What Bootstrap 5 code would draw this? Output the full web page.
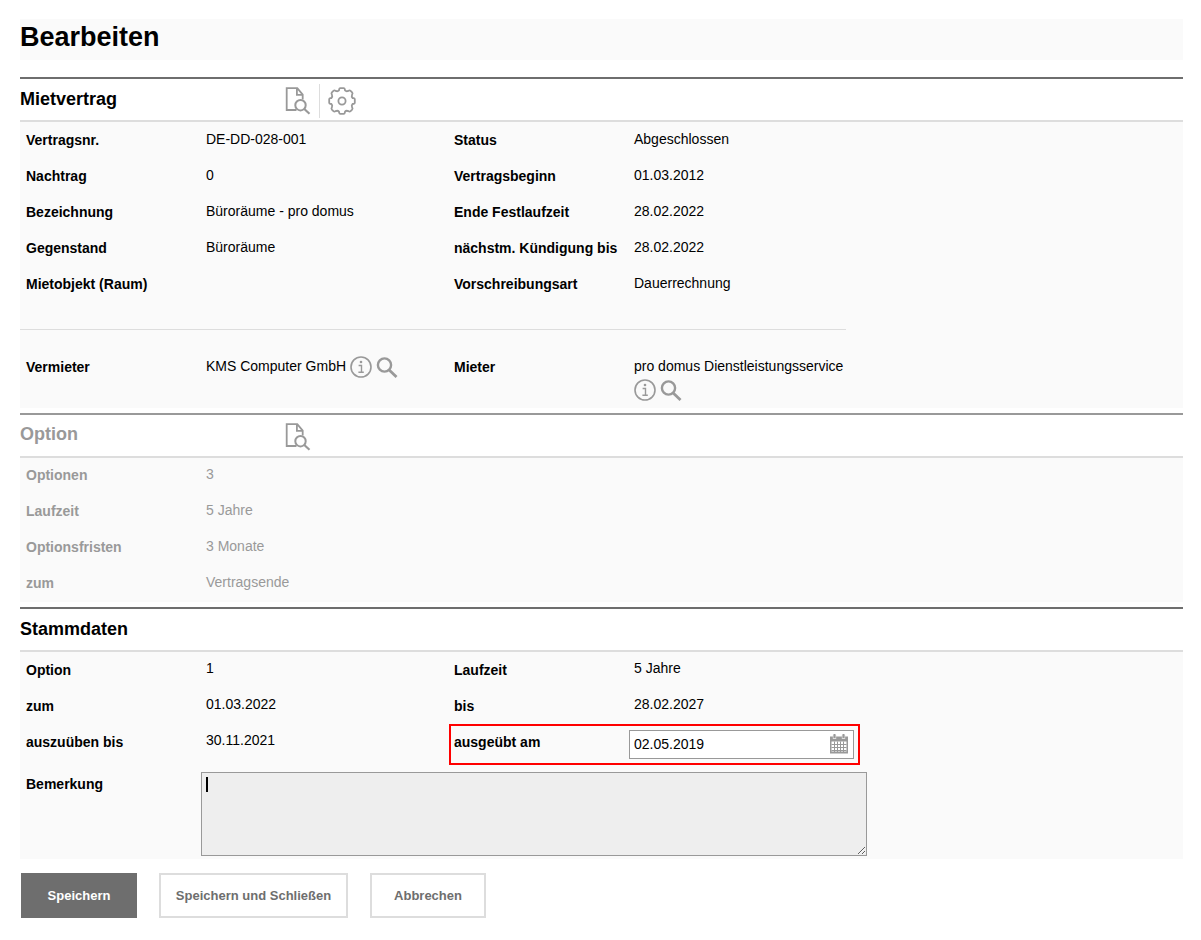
<!DOCTYPE html>
<html lang="de">
<head>
<meta charset="utf-8">
<meta name="viewport" content="width=device-width, initial-scale=1">
<title>Mietvertrag bearbeiten</title>
<link href="https://cdn.jsdelivr.net/npm/bootstrap@5.3.0/dist/css/bootstrap.min.css" rel="stylesheet">
<script src="https://cdn.jsdelivr.net/npm/bootstrap@5.3.0/dist/js/bootstrap.bundle.min.js" defer></script>
<style>
  body { font-family: "Liberation Sans", Arial, sans-serif; font-size: 14px; line-height: 20px; color: #000; background: #fff; }
  .page { padding: 19px 18px 22px 20px; }
  .page-title { font-size: 27px; line-height: 37px; font-weight: 700; padding-bottom: 4px; margin-bottom: 17px; background: #fafafa; }
  .panel { border-top: 2px solid #6e6e6e; margin-bottom: 5px; }
  .panel-head { display: grid; grid-template-columns: 265px 1fr; height: 43px; border-bottom: 2px solid #ddd; align-items: center; }
  .panel-head h2 { font-size: 18px; line-height: 24px; font-weight: 700; margin: 0; padding-bottom: 2px; }
  .panel-body { background: #fafafa; }
  .panel-muted { border-top-color: #999; color: #999; }
  .fields { display: grid; grid-template-columns: 180px 248px 180px 1fr; grid-auto-rows: minmax(36px, auto); margin: 0; max-width: 826px; }
  .fields-wide { max-width: 847px; }
  .key { font-weight: 700; line-height: 36px; padding-left: 6px; white-space: nowrap; }
  .val { line-height: 34px; padding-left: 6px; margin: 0; }
  .fields-wide .val { line-height: 32px; }
  .panel-muted .key { line-height: 34px; }
  .panel-muted .val { line-height: 32px; }
  .panel-muted h2 { padding-bottom: 4px; }
  .party { display: flex; flex-wrap: wrap; align-items: flex-end; align-content: flex-start; column-gap: 4px; row-gap: 1px; line-height: 24px; padding-top: 5px; min-height: 59px; }
  .rule { border-top: 1px solid #ddd; opacity: 1; max-width: 826px; margin: 27px 0 19px; }
  .tool { padding: 0; border: 0; background: none; color: #999; display: block; line-height: 0; }
  .tool svg { display: block; fill: none; stroke: currentColor; }
  .tool-bar { padding-top: 2px; }
  .tool-split { width: 1px; height: 34px; background: #ddd; margin: 0 8px; }
  .marked { grid-column: 3 / 5; display: grid; grid-template-columns: 180px 225px; height: 41px; margin: 0 7px 1px 1px; border: 2px solid #f00; }
  .marked label { line-height: 32px; padding-left: 3px; font-weight: 700; }
  .marked .date-box { margin-left: -2px; margin-top: 4px; width: 225px; height: 29px; }
  .date-box input { width: 100%; height: 29px; border: 1px solid #999; border-radius: 0; background: #fff; padding: 0 30px 2px 4px; color: #000; }
  .date-box .tool { position: absolute; right: 6px; top: 4px; }
  .note { grid-column: 2 / 5; margin: 6px 0 3px 1px; }
  .note textarea { display: block; width: 100%; height: 84px; border: 1px solid #999; background: #eee; padding: 4px 5px; resize: both; color: #000; }
  .note .caret-line { position: absolute; left: 5px; top: 5px; width: 2px; height: 15px; background: #000; }
  .actions { gap: 22px; margin: 14px 0 0 1px; }
  .actions .btn { height: 45px; min-width: 116px; padding: 0 12px; border: 2px solid #ddd; border-radius: 0; background: #fff; color: #6e6e6e; font-size: 13px; font-weight: 700; }
  .actions .btn-main { background: #6e6e6e; border-color: #6e6e6e; color: #fff; }
  .actions .btn-long { min-width: 189px; }
</style>
</head>
<body>
<svg width="0" height="0" class="position-absolute" aria-hidden="true">
  <symbol id="i-doc" viewBox="0 0 25 28">
    <path d="M11 23H1.2V1.2H11.8l5.4 6.4V12.5M11.4 1.2v6.6H17" stroke-width="1.8"/>
    <circle cx="15" cy="18.2" r="5.2" stroke-width="2"/><path d="M18.8 22l5.2 4.8" stroke-width="2.2"/>
  </symbol>
  <symbol id="i-gear" viewBox="-14 -14 28 28">
    <path stroke-width="1.8" stroke-linejoin="round" d="M-1.8-12.8H1.8Q2.6-12.8 2.8-11.8L3-10.6Q4.3-9.2 6.3-10.1 7.6-11 8.6-10.1L10.1-8.6Q11-7.6 10.1-6.3 9.2-4.3 10.6-3L11.8-2.8Q12.8-2.6 12.8-1.8V1.8Q12.8 2.6 11.8 2.8L10.6 3Q9.2 4.3 10.1 6.3 11 7.6 10.1 8.6L8.6 10.1Q7.6 11 6.3 10.1 4.3 9.2 3 10.6L2.8 11.8Q2.6 12.8 1.8 12.8H-1.8Q-2.6 12.8-2.8 11.8L-3 10.6Q-4.3 9.2-6.3 10.1-7.6 11-8.6 10.1L-10.1 8.6Q-11 7.6-10.1 6.3-9.2 4.3-10.6 3L-11.8 2.8Q-12.8 2.6-12.8 1.8V-1.8Q-12.8-2.6-11.8-2.8L-10.6-3Q-9.2-4.3-10.1-6.3-11-7.6-10.1-8.6L-8.6-10.1Q-7.6-11-6.3-10.1-4.3-9.2-3-10.6L-2.8-11.8Q-2.6-12.8-1.8-12.8Z"/>
    <circle r="3.6" stroke-width="1.8"/>
  </symbol>
  <symbol id="i-info" viewBox="0 0 22 22">
    <circle cx="11" cy="11" r="10" stroke-width="1.6"/>
    <circle cx="11" cy="6" r="1.3" fill="currentColor" stroke="none"/>
    <path d="M8.6 9.5h2.9v6.7M8.4 16.3h5.4" stroke-width="1.4"/>
  </symbol>
  <symbol id="i-search" viewBox="0 0 22 22">
    <circle cx="8.5" cy="9" r="6.6" stroke-width="2.4"/><path d="M13.2 14l7.3 7" stroke-width="2.8"/>
  </symbol>
  <symbol id="i-cal" viewBox="0 0 18 20">
    <path d="M0 2.5h18v17H0z" fill="#999" stroke="none"/>
    <path d="M1.5 7.5h15V17.5h-15z" fill="#fff" stroke="none"/>
    <path d="M4.5 7.5V18M7.5 7.5V18M10.5 7.5V18M13.5 7.5V18M1.5 10.5h15M1.5 13.5h15M1.5 16.5h15" stroke-width="1"/>
    <path d="M4.5 5V1M13.5 5V1" stroke="#ddd" stroke-width="3.4"/>
    <path d="M4.5 4V0M13.5 4V0" stroke-width="2"/>
  </symbol>
</svg>

<main class="page">
  <h1 class="page-title">Bearbeiten</h1>

  <section class="panel">
    <div class="panel-head">
      <h2>Mietvertrag</h2>
      <div class="tool-bar d-flex align-items-center">
        <button type="button" class="tool" aria-label="Dokument anzeigen"><svg width="26" height="28"><use href="#i-doc"/></svg></button>
        <span class="tool-split"></span>
        <button type="button" class="tool" aria-label="Einstellungen"><svg width="28" height="28"><use href="#i-gear"/></svg></button>
      </div>
    </div>
    <div class="panel-body">
      <dl class="fields">
        <dt class="key">Vertragsnr.</dt><dd class="val">DE-DD-028-001</dd>
        <dt class="key">Status</dt><dd class="val">Abgeschlossen</dd>
        <dt class="key">Nachtrag</dt><dd class="val">0</dd>
        <dt class="key">Vertragsbeginn</dt><dd class="val">01.03.2012</dd>
        <dt class="key">Bezeichnung</dt><dd class="val">Büroräume - pro domus</dd>
        <dt class="key">Ende Festlaufzeit</dt><dd class="val">28.02.2022</dd>
        <dt class="key">Gegenstand</dt><dd class="val">Büroräume</dd>
        <dt class="key">nächstm. Kündigung bis</dt><dd class="val">28.02.2022</dd>
        <dt class="key">Mietobjekt (Raum)</dt><dd class="val"></dd>
        <dt class="key">Vorschreibungsart</dt><dd class="val">Dauerrechnung</dd>
      </dl>
      <div class="overflow-hidden">
        <hr class="rule">
        <dl class="fields">
          <dt class="key">Vermieter</dt>
          <dd class="val party">
            <span>KMS Computer GmbH</span>
            <span class="d-flex gap-1">
              <button type="button" class="tool" aria-label="Info zum Vermieter"><svg width="22" height="22"><use href="#i-info"/></svg></button>
              <button type="button" class="tool" aria-label="Vermieter suchen"><svg width="22" height="22"><use href="#i-search"/></svg></button>
            </span>
          </dd>
          <dt class="key">Mieter</dt>
          <dd class="val party">
            <span>pro domus Dienstleistungsservice</span>
            <span class="d-flex gap-1">
              <button type="button" class="tool" aria-label="Info zum Mieter"><svg width="22" height="22"><use href="#i-info"/></svg></button>
              <button type="button" class="tool" aria-label="Mieter suchen"><svg width="22" height="22"><use href="#i-search"/></svg></button>
            </span>
          </dd>
        </dl>
      </div>
    </div>
  </section>

  <section class="panel panel-muted">
    <div class="panel-head">
      <h2>Option</h2>
      <div class="tool-bar d-flex align-items-center">
        <button type="button" class="tool" aria-label="Dokument anzeigen"><svg width="26" height="28"><use href="#i-doc"/></svg></button>
      </div>
    </div>
    <div class="panel-body">
      <dl class="fields">
        <dt class="key">Optionen</dt><dd class="val">3</dd><dt></dt><dd class="val"></dd>
        <dt class="key">Laufzeit</dt><dd class="val">5 Jahre</dd><dt></dt><dd class="val"></dd>
        <dt class="key">Optionsfristen</dt><dd class="val">3 Monate</dd><dt></dt><dd class="val"></dd>
        <dt class="key">zum</dt><dd class="val">Vertragsende</dd>
      </dl>
    </div>
  </section>

  <form>
    <section class="panel mb-0">
      <div class="panel-head"><h2>Stammdaten</h2></div>
      <div class="panel-body">
        <div class="fields fields-wide">
          <div class="key">Option</div><div class="val">1</div>
          <div class="key">Laufzeit</div><div class="val">5 Jahre</div>
          <div class="key">zum</div><div class="val">01.03.2022</div>
          <div class="key">bis</div><div class="val">28.02.2027</div>
          <div class="key">auszuüben bis</div><div class="val">30.11.2021</div>
          <div class="marked">
            <label for="exercised">ausgeübt am</label>
            <div class="date-box position-relative">
              <input type="text" id="exercised" value="02.05.2019">
              <button type="button" class="tool" aria-label="Datum wählen"><svg width="18" height="20"><use href="#i-cal"/></svg></button>
            </div>
          </div>
          <label class="key" for="remark">Bemerkung</label>
          <div class="note position-relative">
            <textarea id="remark"></textarea>
            <span class="caret-line"></span>
          </div>
        </div>
      </div>
    </section>
    <div class="actions d-flex flex-wrap">
      <button type="button" class="btn btn-main">Speichern</button>
      <button type="button" class="btn btn-long">Speichern und Schließen</button>
      <button type="button" class="btn">Abbrechen</button>
    </div>
  </form>
</main>
</body>
</html>
